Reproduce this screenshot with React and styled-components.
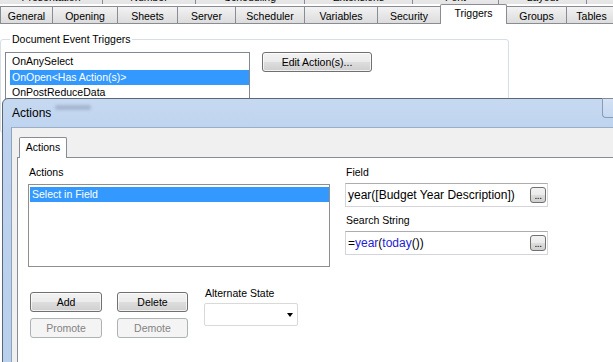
import React from 'react'
import styled, { createGlobalStyle } from 'styled-components'

const GlobalStyle = createGlobalStyle`
  html, body {
    margin: 0;
    padding: 0;
    background: #fff;
  }
  body {
    font-family: "Liberation Sans", Arial, sans-serif;
    font-size: 10.5px;
    color: #000;
  }
  * {
    box-sizing: border-box;
  }
`

const Screen = styled.div`
  position: relative;
  width: 613px;
  height: 362px;
  overflow: hidden;
  background: #fff;
`

const TabRows = styled.div`
  display: flex;
  flex-direction: column;
  height: 23px;
`

const UpperRow = styled.div`
  display: flex;
  flex: 0 0 18px;
  margin-top: -14px;
`

const UpperTab = styled.div`
  flex: 0 0 ${p => p.w}px;
  height: 18px;
  border-top: 1px solid #898c95;
  border-right: 1px solid #898c95;
  background: linear-gradient(#f4f4f4, #e4e4e4);
  text-align: center;
  padding-top: 4px;
  line-height: 13px;
  white-space: nowrap;
  overflow: hidden;
`

const LowerRow = styled.div`
  display: flex;
  align-items: flex-end;
  flex: 0 0 19px;
`

const Tab = styled.div`
  position: relative;
  flex: 0 0 ${p => p.w}px;
  height: ${p => (p.active ? 20 : 18)}px;
  margin-left: ${p => (p.active ? -1 : 0)}px;
  border: 1px solid #898c95;
  border-left-width: ${p => (p.active || p.first ? 1 : 0)}px;
  border-bottom-width: ${p => (p.active ? 0 : 1)}px;
  border-radius: ${p => (p.active ? '2px 2px 0 0' : '0')};
  background: ${p => (p.active ? '#fff' : 'linear-gradient(#f3f3f3, #e6e6e6 55%, #dcdcdc)')};
  z-index: ${p => (p.active ? 2 : 1)};
  text-align: center;
  padding-top: ${p => (p.active ? 2 : 3)}px;
  line-height: 13px;
  white-space: nowrap;
`

const GroupBox = styled.fieldset`
  width: 509px;
  height: 100px;
  margin: 10px 0 0 0;
  padding: 7px 0 0 4px;
  border: 1px solid #d5dfe5;
  border-radius: 3px;
  display: flex;
  align-items: flex-start;
`

const Legend = styled.legend`
  margin-left: 5px;
  padding: 0 2px;
  line-height: 12px;
`

const TriggerList = styled.div`
  width: 245px;
  height: 70px;
  border: 1px solid #828790;
  padding: 1px 0 0 4px;
`

const ListItem = styled.div`
  height: ${p => p.h || 15.5}px;
  line-height: ${p => p.h || 15.5}px;
  padding-left: 2px;
  background: ${p => (p.selected ? '#3399ff' : 'transparent')};
  color: ${p => (p.selected ? '#fff' : '#000')};
  white-space: nowrap;
`

const PushButton = styled.div`
  width: ${p => p.w}px;
  height: 20px;
  margin-left: ${p => p.ml || 0}px;
  border: 1px solid ${p => (p.disabled ? '#adb2b5' : '#707070')};
  border-radius: 3px;
  background: ${p =>
    p.disabled
      ? '#f4f4f4'
      : 'linear-gradient(#f2f2f2 0%, #ebebeb 50%, #dddddd 51%, #cfcfcf 100%)'};
  box-shadow: inset 0 0 0 1px ${p => (p.disabled ? '#f4f4f4' : 'rgba(255,255,255,0.7)')};
  color: ${p => (p.disabled ? '#838383' : '#000')};
  display: flex;
  align-items: center;
  justify-content: center;
  line-height: 13px;
`

const Dialog = styled.div`
  position: absolute;
  left: 2px;
  top: 98px;
  width: 660px;
  height: 290px;
  display: flex;
  flex-direction: column;
  padding: 0 8px;
  border: 1px solid #5d6673;
  border-radius: 6px 6px 0 0;
  background: linear-gradient(#c6d9f1, #bcd2ee 40px, #b9d0ec);
  z-index: 5;
`

const TitleBar = styled.div`
  position: relative;
  height: 28px;
  display: flex;
  align-items: center;
  padding-left: 1px;
`

const Title = styled.span`
  font-size: 12px;
  line-height: 14px;
`

/* blurred content showing through the glass frame */
const GlassSmudge = styled.span`
  position: absolute;
  left: 44px;
  top: 6px;
  width: 36px;
  height: 5px;
  border-radius: 3px;
  background: rgba(60, 70, 90, 0.22);
  filter: blur(1.8px);
`

const CloseButton = styled.div`
  align-self: flex-start;
  margin: -1px 8px 0 auto;
  width: 43px;
  height: 20px;
  border: 1px solid #8b9bb4;
  border-top: 0;
  border-radius: 0 0 4px 4px;
  background: linear-gradient(rgba(255, 255, 255, 0.25), rgba(255, 255, 255, 0.05));
`

const ClientArea = styled.div`
  flex: 1;
  border-top: 1px solid #9aaec8;
  border-left: 1px solid #8fa3bd;
  background: #f0f0f0;
  padding: 9px 0 0 5px;
  display: flex;
  flex-direction: column;
`

const TabHeader = styled.div`
  display: flex;
  height: 20px;
  padding-left: 2px;
`

const PageTab = styled.div`
  position: relative;
  z-index: 1;
  width: 48px;
  height: 21px;
  border: 1px solid #898c95;
  border-bottom: 0;
  border-radius: 2px 2px 0 0;
  background: #fff;
  text-align: center;
  line-height: 13px;
  padding-top: 3px;
`

const TabPage = styled.div`
  flex: 1;
  border-top: 1px solid #898c95;
  border-left: 1px solid #898c95;
  background: #fff;
  padding: 7px 0 0 10px;
`

const TopSection = styled.div`
  display: flex;
  align-items: flex-start;
`

const Column = styled.div`
  width: ${p => p.w}px;
  margin-left: ${p => p.ml || 0}px;
  display: flex;
  flex-direction: column;
`

const Label = styled.div`
  height: 14px;
  line-height: 14px;
  padding-left: 1px;
  margin-top: ${p => p.mt || 0}px;
  white-space: nowrap;
`

const ActionList = styled.div`
  margin-top: 5px;
  height: 83px;
  border: 1px solid #8e8f8f;
  padding: 2px 0 0 1px;
`

const TextBox = styled.div`
  margin-top: 4px;
  height: 24px;
  border: 1px solid #d3d5da;
  border-top-color: #abadb3;
  display: flex;
  align-items: center;
  justify-content: space-between;
  padding: 0 1px 0 2px;
  font-size: 12px;
  white-space: nowrap;
`

const Kw = styled.span`
  color: #1c1cd6;
`

const EllipsisButton = styled.div`
  width: 16px;
  height: 16px;
  border: 1px solid #707070;
  border-radius: 3px;
  background: linear-gradient(#f2f2f2 0%, #ebebeb 50%, #dddddd 51%, #cfcfcf 100%);
  display: flex;
  align-items: flex-end;
  justify-content: center;
  font-size: 10px;
  line-height: 10px;
  padding-bottom: 1px;
  letter-spacing: -0.5px;
`

const BottomSection = styled.div`
  display: flex;
  align-items: flex-start;
  margin-top: 19px;
`

const ButtonGrid = styled.div`
  display: grid;
  grid-template-columns: 72px 71px;
  column-gap: 15px;
  row-gap: 6px;
  margin: 6px 0 0 2px;
`

const StateBox = styled.div`
  margin-left: 16px;
  display: flex;
  flex-direction: column;
`

const Dropdown = styled.div`
  margin-top: 3px;
  width: 94px;
  height: 23px;
  border: 1px solid #d9d9d9;
  border-radius: 2px;
  background: #fff;
  display: flex;
  align-items: center;
  justify-content: flex-end;
  padding-right: 4px;
`

const Arrow = styled.span`
  width: 0;
  height: 0;
  border-left: 3.5px solid transparent;
  border-right: 3.5px solid transparent;
  border-top: 4px solid #000;
`

const upperTabs = [
  ['Presentation', 103],
  ['Number', 93],
  ['Scheduling', 109],
  ['Extensions', 108],
  ['Font', 86],
  ['Layout', 88],
  ['', 40],
]

const lowerTabs = [
  ['General', 53],
  ['Opening', 65],
  ['Sheets', 60],
  ['Server', 58],
  ['Scheduler', 69],
  ['Variables', 73],
  ['Security', 63],
  ['Triggers', 67, true],
  ['Groups', 60],
  ['Tables', 50],
]

export default function App() {
  return (
    <Screen>
      <GlobalStyle />
      <TabRows>
        <UpperRow>
          {upperTabs.map(([name, w]) => (
            <UpperTab key={name + w} w={w}>
              {name}
            </UpperTab>
          ))}
        </UpperRow>
        <LowerRow>
          {lowerTabs.map(([name, w, active], i) => (
            <Tab key={name} w={w} active={active} first={i === 0}>
              {name}
            </Tab>
          ))}
        </LowerRow>
      </TabRows>

      <GroupBox>
        <Legend>Document Event Triggers</Legend>
        <TriggerList>
          <ListItem>OnAnySelect</ListItem>
          <ListItem selected>OnOpen&lt;Has Action(s)&gt;</ListItem>
          <ListItem>OnPostReduceData</ListItem>
        </TriggerList>
        <PushButton w={110} ml={12}>Edit Action(s)...</PushButton>
      </GroupBox>

      <Dialog>
        <TitleBar>
          <Title>Actions</Title>
          <GlassSmudge />
          <CloseButton />
        </TitleBar>
        <ClientArea>
          <TabHeader>
            <PageTab>Actions</PageTab>
          </TabHeader>
          <TabPage>
            <TopSection>
              <Column w={302}>
                <Label>Actions</Label>
                <ActionList>
                  <ListItem selected h={15}>Select in Field</ListItem>
                </ActionList>
              </Column>
              <Column w={203} ml={15}>
                <Label>Field</Label>
                <TextBox>
                  <span>year([Budget Year Description])</span>
                  <EllipsisButton>...</EllipsisButton>
                </TextBox>
                <Label mt={6}>Search String</Label>
                <TextBox>
                  <span>
                    =<Kw>year</Kw>(<Kw>today</Kw>())
                  </span>
                  <EllipsisButton>...</EllipsisButton>
                </TextBox>
              </Column>
            </TopSection>
            <BottomSection>
              <ButtonGrid>
                <PushButton w={72}>Add</PushButton>
                <PushButton w={71}>Delete</PushButton>
                <PushButton w={72} disabled>Promote</PushButton>
                <PushButton w={71} disabled>Demote</PushButton>
              </ButtonGrid>
              <StateBox>
                <Label>Alternate State</Label>
                <Dropdown>
                  <Arrow />
                </Dropdown>
              </StateBox>
            </BottomSection>
          </TabPage>
        </ClientArea>
      </Dialog>
    </Screen>
  )
}
